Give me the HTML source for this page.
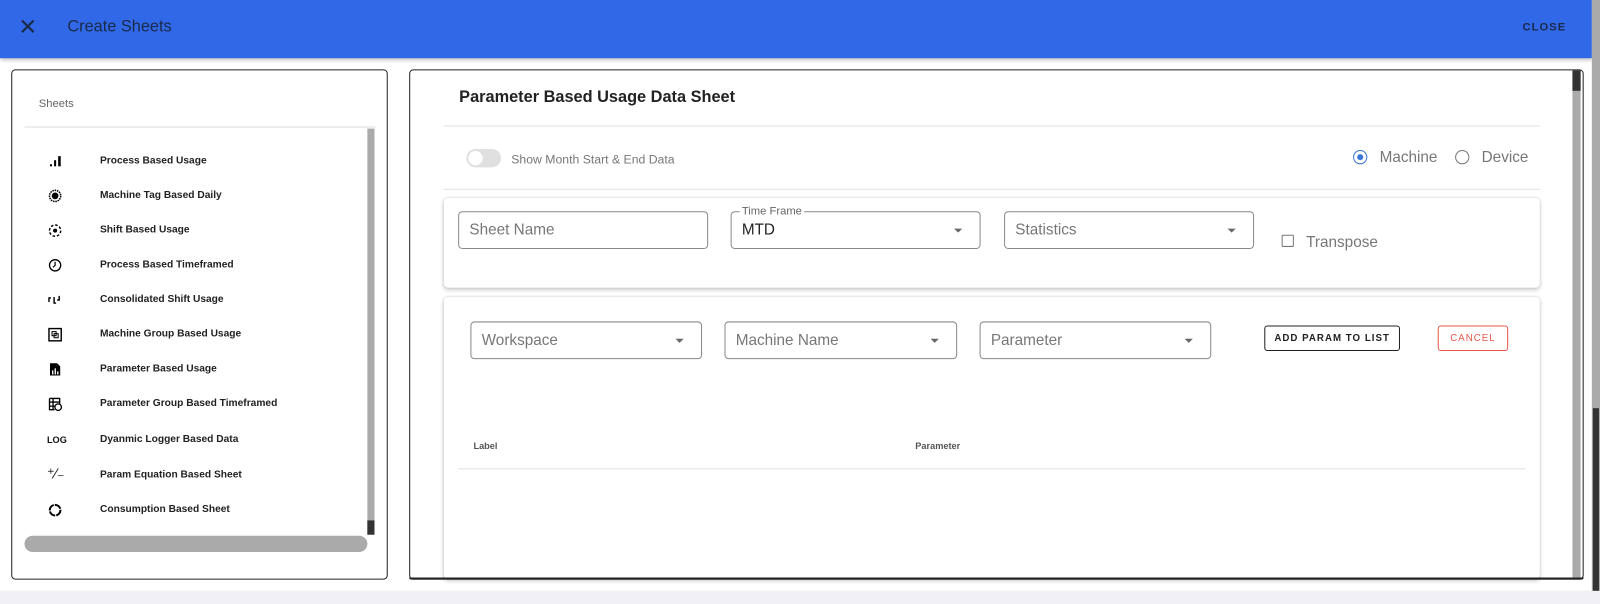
<!DOCTYPE html><html><head><style>
*{box-sizing:border-box;margin:0;padding:0}
body{width:1600px;height:592px;overflow:hidden;background:#f1f0f7;font-family:"Liberation Sans",sans-serif;position:relative}
#w{position:absolute;left:0;top:0;width:1568px;height:580px;transform:scale(1.020408);transform-origin:0 0}
.a{position:absolute}
.hdr{left:0;top:0;width:1560px;height:57px;background:#3068e8;box-shadow:0 2px 4px rgba(0,0,0,.3)}
.bg{left:0;top:57px;width:1560px;height:522px;background:#fff}
.inp{position:absolute;border:1px solid #8a8a8a;border-radius:4px;height:37px;font-size:15px;color:#777;padding:9px 10px;background:#fff}
.caret{position:absolute;right:17px;top:16px;border-left:4px solid transparent;border-right:4px solid transparent;border-top:4px solid #666}
.it{position:absolute;left:98px;font-size:10px;font-weight:bold;color:#222}
.ic{position:absolute;left:47px;width:14px;height:14px}
</style></head><body><div id="w">
<div class="a bg"></div>
<div class="a hdr"></div>
<div class="a" style="left:18px;top:14px;font-size:22px;color:#1a2a4a">✕</div>
<div class="a" style="left:66px;top:18px;font-size:16px;color:#1a2a4a">Create Sheets</div>
<div class="a" style="left:1492px;top:21px;font-size:11px;font-weight:bold;letter-spacing:1px;color:#1a2a4a">CLOSE</div>
<div class="a" style="left:1560px;top:0;width:8px;height:580px;background:#aaa"></div>
<div class="a" style="left:1561px;top:400px;width:6px;height:180px;background:#333"></div>
<div class="a" style="left:0;top:579px;width:1568px;height:13px;background:#f1f0f7"></div>

<div class="a" style="left:11px;top:68px;width:369px;height:500px;border:1px solid #222;border-radius:4px;background:#fff"></div>
<div class="a" style="left:38px;top:96px;font-size:11px;color:#666">Sheets</div>
<div class="a" style="left:24px;top:124px;width:344px;height:1px;background:#ddd"></div>
<div class="a" style="left:360px;top:126px;width:7px;height:398px;background:#aaa"></div>
<div class="a" style="left:360px;top:510px;width:7px;height:14px;background:#333"></div>
<div class="a" style="left:24px;top:525px;width:336px;height:16px;border-radius:8px;background:#aaa"></div>

<svg class="ic" style="top:151px" viewBox="0 0 14 14"><rect x="2" y="10" width="2" height="2"/><rect x="6" y="6" width="2" height="6"/><rect x="10" y="2" width="2.5" height="10"/></svg>
<div class="it" style="top:152px">Process Based Usage</div>
<svg class="ic" style="top:185px" viewBox="0 0 14 14"><circle cx="7" cy="7" r="5.5" fill="none" stroke="#000" stroke-width="1.5" stroke-dasharray="1.5 0.8"/><circle cx="7" cy="7" r="3.3"/></svg>
<div class="it" style="top:186px">Machine Tag Based Daily</div>
<svg class="ic" style="top:219px" viewBox="0 0 14 14"><circle cx="7" cy="7" r="5.5" fill="none" stroke="#000" stroke-width="1.4" stroke-dasharray="2.5 1.8"/><circle cx="7" cy="7" r="2"/></svg>
<div class="it" style="top:220px">Shift Based Usage</div>
<svg class="ic" style="top:253px" viewBox="0 0 14 14"><circle cx="7" cy="7" r="5.5" fill="none" stroke="#000" stroke-width="1.3"/><path d="M7 3.5V7L5 9" stroke="#000" fill="none" stroke-width="1.2"/></svg>
<div class="it" style="top:254px">Process Based Timeframed</div>
<svg class="ic" style="top:287px" viewBox="0 0 14 14"><path d="M1 9V5h2M6 4v6h2M11 3v4h-2" stroke="#000" fill="none" stroke-width="1.4"/></svg>
<div class="it" style="top:288px">Consolidated Shift Usage</div>
<svg class="ic" style="top:321px" viewBox="0 0 14 14"><rect x="1" y="1" width="12" height="12" fill="none" stroke="#000" stroke-width="1.4"/><rect x="4" y="4" width="4" height="4" fill="none" stroke="#000"/><rect x="6" y="6" width="4" height="4" fill="none" stroke="#000"/></svg>
<div class="it" style="top:322px">Machine Group Based Usage</div>
<svg class="ic" style="top:355px" viewBox="0 0 14 14"><path d="M2 1h7l3 3v9H2z"/><rect x="4" y="8" width="1.3" height="4" fill="#fff"/><rect x="6.5" y="6" width="1.3" height="6" fill="#fff"/><rect x="9" y="9" width="1.3" height="3" fill="#fff"/></svg>
<div class="it" style="top:356px">Parameter Based Usage</div>
<svg class="ic" style="top:389px" viewBox="0 0 14 14"><path d="M1.5 1.5h10v5M1.5 1.5v11h5M1.5 5h10M1.5 9h5M5 1.5v11" stroke="#000" fill="none" stroke-width="1.3"/><circle cx="10" cy="10" r="3.2" fill="none" stroke="#000" stroke-width="1.3"/></svg>
<div class="it" style="top:390px">Parameter Group Based Timeframed</div>
<div class="a" style="left:46px;top:426px;font-size:9px;font-weight:bold;color:#111">LOG</div>
<div class="it" style="top:425px">Dyanmic Logger Based Data</div>
<div class="a" style="left:46px;top:456px;font-size:14px;color:#111">⁺⁄₋</div>
<div class="it" style="top:460px">Param Equation Based Sheet</div>
<svg class="ic" style="top:493px" viewBox="0 0 14 14"><circle cx="7" cy="7" r="5.2" fill="none" stroke="#000" stroke-width="2" stroke-dasharray="7 1"/></svg>
<div class="it" style="top:494px">Consumption Based Sheet</div>

<div class="a" style="left:401px;top:68px;width:1151px;height:500px;border:1px solid #222;border-radius:4px;background:#fff;overflow:hidden">
<div class="a" style="left:1139px;top:0;width:8px;height:500px;background:#aaa"></div>
<div class="a" style="left:1139px;top:0;width:8px;height:20px;background:#333"></div>
</div>
<div class="a" style="left:450px;top:87px;font-size:16px;font-weight:bold;color:#222">Parameter Based Usage Data Sheet</div>
<div class="a" style="left:435px;top:123px;width:1074px;height:1px;background:#e2e2e2"></div>
<div class="a" style="left:457px;top:146px;width:34px;height:18px;border-radius:9px;background:#e0e0e0"></div>
<div class="a" style="left:459px;top:148px;width:14px;height:14px;border-radius:7px;background:#fff"></div>
<div class="a" style="left:501px;top:149px;font-size:12px;color:#777">Show Month Start &amp; End Data</div>
<div class="a" style="left:1326px;top:147px;width:14px;height:14px;border-radius:50%;border:1.5px solid #3a78d8"></div>
<div class="a" style="left:1330px;top:151px;width:6px;height:6px;border-radius:50%;background:#3a78d8"></div>
<div class="a" style="left:1352px;top:146px;font-size:15px;color:#777">Machine</div>
<div class="a" style="left:1426px;top:147px;width:14px;height:14px;border-radius:50%;border:1.5px solid #777"></div>
<div class="a" style="left:1452px;top:146px;font-size:15px;color:#777">Device</div>
<div class="a" style="left:435px;top:185px;width:1074px;height:1px;background:#e2e2e2"></div>

<div class="a" style="left:435px;top:194px;width:1074px;height:88px;background:#fff;border-radius:4px;box-shadow:0 2px 4px rgba(0,0,0,.2),0 0 2px rgba(0,0,0,.1)"></div>
<div class="inp" style="left:449px;top:207px;width:245px">Sheet Name</div>
<div class="inp" style="left:716px;top:207px;width:245px;color:#222">MTD<div class="caret"></div></div>
<div class="a" style="left:725px;top:201px;font-size:11px;color:#666;background:#fff;padding:0 2px">Time Frame</div>
<div class="inp" style="left:984px;top:207px;width:245px">Statistics<div class="caret"></div></div>
<div class="a" style="left:1256px;top:230px;width:12px;height:12px;border:1.5px solid #777;border-radius:1px"></div>
<div class="a" style="left:1280px;top:229px;font-size:15px;color:#777">Transpose</div>

<div class="a" style="left:435px;top:291px;width:1074px;height:276px;background:#fff;border-radius:4px;box-shadow:0 2px 4px rgba(0,0,0,.2),0 0 2px rgba(0,0,0,.1)"></div>
<div class="inp" style="left:461px;top:315px;width:227px">Workspace<div class="caret"></div></div>
<div class="inp" style="left:710px;top:315px;width:228px">Machine Name<div class="caret"></div></div>
<div class="inp" style="left:960px;top:315px;width:227px">Parameter<div class="caret"></div></div>
<div class="a" style="left:1239px;top:319px;width:133px;height:25px;border:1px solid #222;border-radius:3px;font-size:9.5px;font-weight:bold;letter-spacing:1px;color:#222;text-align:center;line-height:23px">ADD PARAM TO LIST</div>
<div class="a" style="left:1409px;top:319px;width:69px;height:25px;border:1px solid #e8574a;border-radius:3px;font-size:9.5px;letter-spacing:1px;color:#e8574a;text-align:center;line-height:23px">CANCEL</div>
<div class="a" style="left:464px;top:432px;font-size:9px;font-weight:bold;color:#555">Label</div>
<div class="a" style="left:897px;top:432px;font-size:9px;font-weight:bold;color:#555">Parameter</div>
<div class="a" style="left:449px;top:459px;width:1046px;height:1px;background:#e2e2e2"></div>
<div class="a" style="left:401px;top:566px;width:1151px;height:2px;background:#222;border-radius:0 0 4px 4px"></div>
</div></body></html>
